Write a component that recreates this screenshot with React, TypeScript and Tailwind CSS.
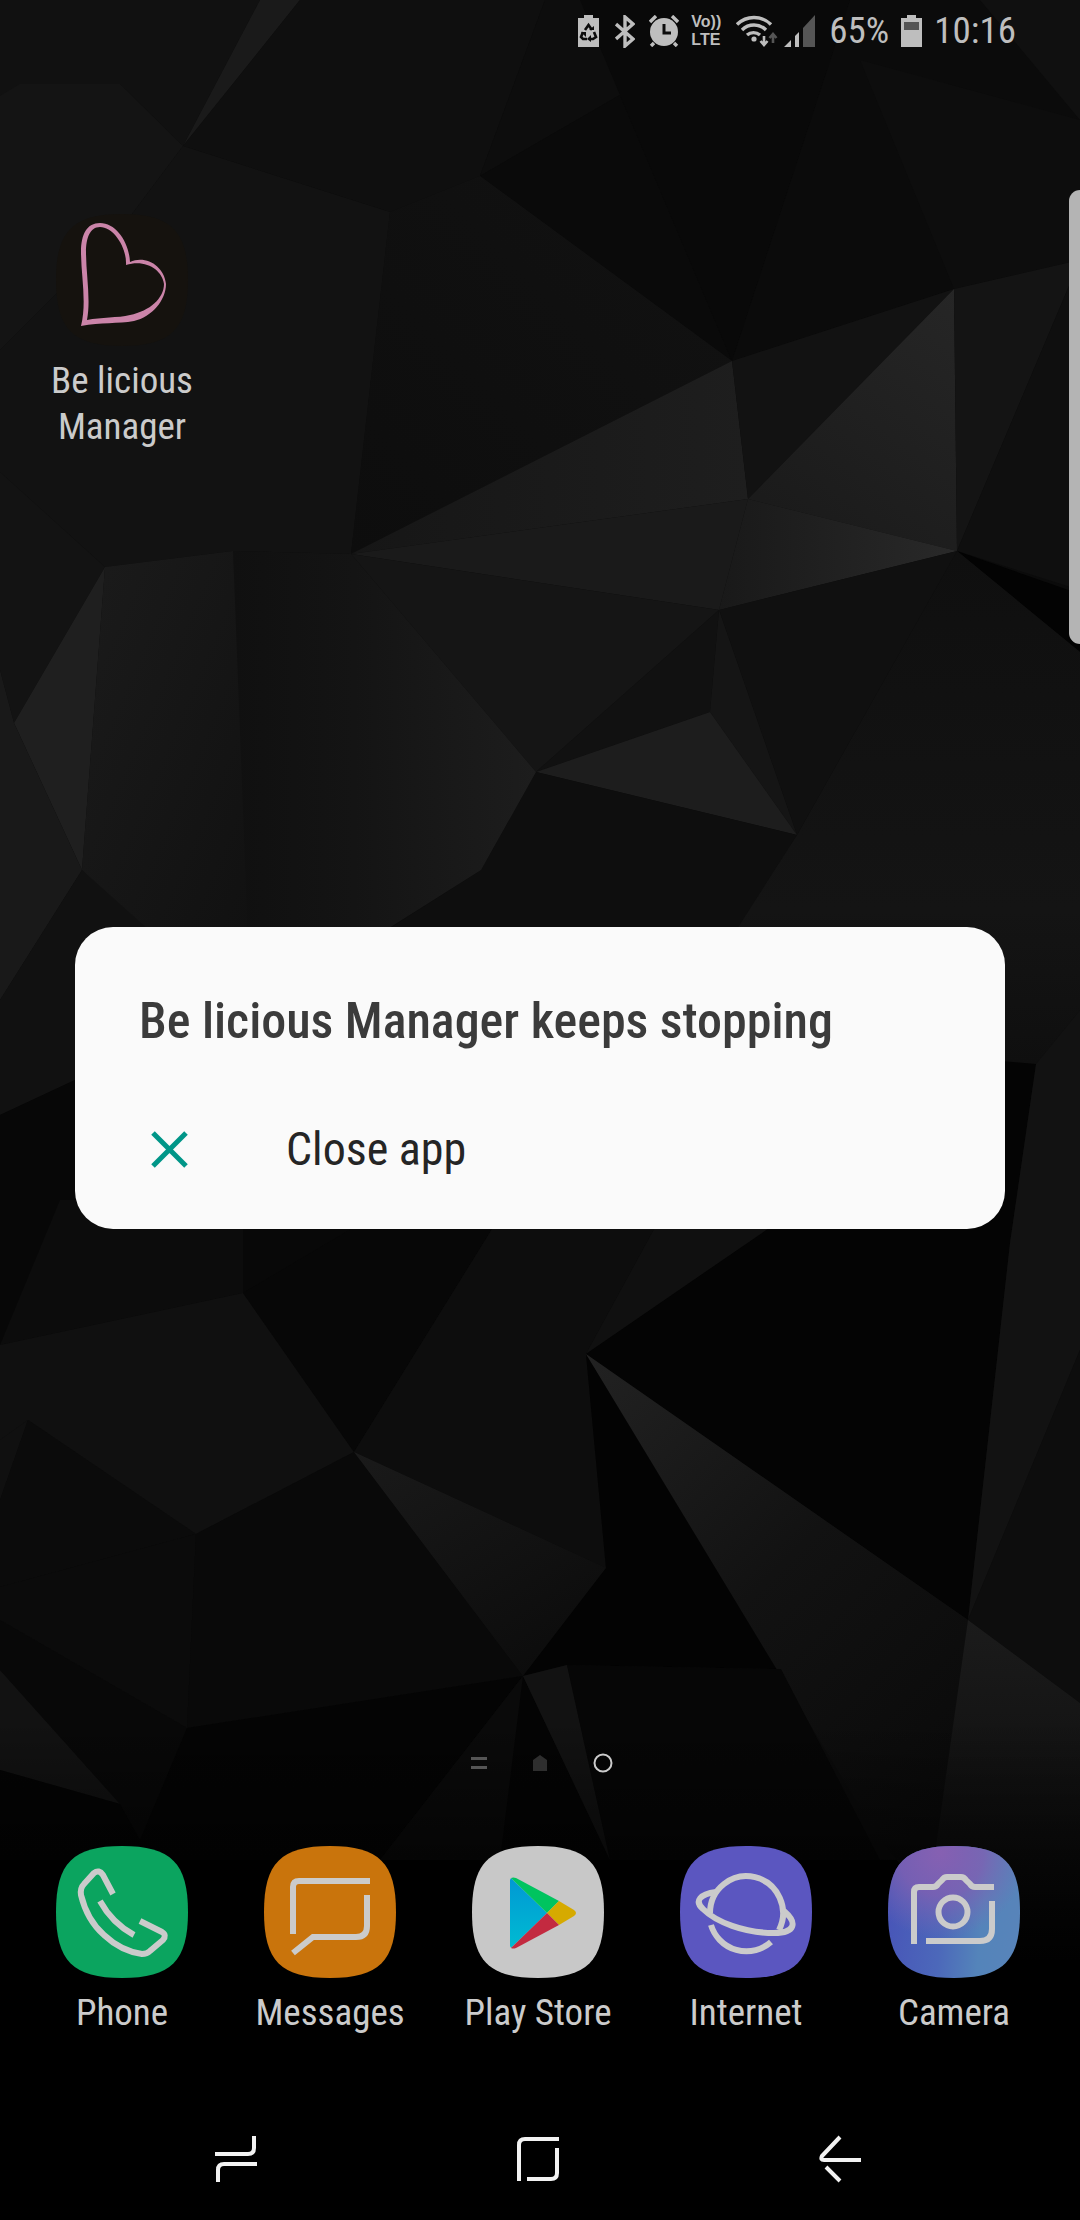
import type { ReactNode } from "react";

const facets = [
  // top
  { points: "0,0 260,0 183,146 120,84 0,96", fill: "#111111" },
  { points: "20,84 120,84 183,146 120,230 0,350 0,96", fill: "#141414" },
  { points: "260,0 300,0 183,146", fill: "#1a1a1a" },
  { points: "300,0 545,0 480,176 390,212 183,146", fill: "#0f0f0f" },
  { points: "545,0 700,0 620,95 480,176", fill: "#0d0d0d" },
  { points: "620,95 732,361 480,176", fill: "#0a0a0a" },
  { points: "580,0 850,0 732,361 620,95", fill: "#090909" },
  { points: "850,0 1080,0 1080,130 954,289 732,361", fill: "#0b0b0b" },
  { points: "980,0 1080,0 1080,120", fill: "#101010" },
  { points: "1080,120 1080,260 954,289 860,60", fill: "#0d0d0d" },
  { points: "183,146 390,212 351,554 233,551 105,567 0,472 0,350 120,230", fill: "#121212" },
  { points: "390,212 480,176 732,361 351,554", fill: "url(#deep)" },
  // centre right cluster
  { points: "351,554 732,361 748,499", fill: "url(#wingTop)" },
  { points: "732,361 954,289 748,499", fill: "#121212" },
  { points: "954,289 957,551 748,499", fill: "url(#bright)" },
  { points: "351,554 748,499 719,610", fill: "#1a1a1a" },
  { points: "748,499 957,551 719,610", fill: "url(#wedge)" },
  { points: "954,289 1080,260 957,551", fill: "#141414" },
  { points: "1080,260 1080,590 957,551", fill: "#0f0f0f" },
  { points: "957,551 1080,594 1080,652", fill: "#030303" },
  { points: "957,551 1080,652 1080,1010 1036,1064 720,1064 730,930 797,835", fill: "url(#rightSlab)" },
  { points: "719,610 957,551 797,835", fill: "#101010" },
  { points: "351,554 719,610 536,772", fill: "#151515" },
  { points: "719,610 710,712 536,772", fill: "#111111" },
  { points: "719,610 797,835 710,712", fill: "#151515" },
  { points: "536,772 710,712 797,835", fill: "#1d1d1d" },
  { points: "536,772 797,835 730,940 390,928 481,870", fill: "#0e0e0e" },
  { points: "351,554 536,772 481,870 370,940 240,940 233,551", fill: "url(#spine)" },
  // left
  { points: "0,472 105,567 14,723 0,670", fill: "#131313" },
  { points: "105,567 82,870 14,723", fill: "#1f1f1f" },
  { points: "105,567 233,551 248,940 150,940 82,870", fill: "url(#leftSlab)" },
  { points: "0,670 14,723 82,870 0,1000", fill: "#191919" },
  { points: "82,870 160,940 75,1080 0,1115 0,1000", fill: "#111111" },
  { points: "0,1115 75,1080 80,1229 0,1345", fill: "#070707" },
  // below the card
  { points: "0,1345 60,1200 243,1200 243,1293", fill: "#0c0c0c" },
  { points: "243,1200 420,1200 243,1293", fill: "#080808" },
  { points: "0,1345 243,1293 354,1452 196,1534 28,1420 0,1440", fill: "#101010" },
  { points: "243,1293 400,1200 510,1200 354,1452", fill: "#070707" },
  { points: "510,1200 670,1200 586,1354 606,1568 354,1452", fill: "#0d0d0d" },
  { points: "670,1200 810,1200 586,1354", fill: "#101010" },
  { points: "810,1200 990,1060 1036,1064 1010,1243 968,1620 586,1354", fill: "#040404" },
  { points: "1036,1064 1080,1010 1080,1350 968,1620 1010,1243", fill: "#121212" },
  { points: "1080,1350 1080,1703 968,1620", fill: "#0d0d0d" },
  { points: "0,1440 28,1420 0,1500", fill: "#101010" },
  { points: "28,1420 196,1534 0,1587 0,1500", fill: "#0b0b0b" },
  { points: "0,1587 196,1534 187,1728 0,1620", fill: "#0b0b0b" },
  { points: "196,1534 354,1452 523,1676 187,1728", fill: "#090909" },
  { points: "354,1452 606,1568 523,1676", fill: "url(#kite)" },
  { points: "586,1354 781,1669 567,1665 523,1676 606,1568", fill: "#030303" },
  { points: "586,1354 968,1620 930,1900 880,1840", fill: "url(#spike)" },
  { points: "968,1620 1080,1703 1080,1960 920,1960", fill: "url(#corner)" },
  { points: "0,1670 120,1804 0,1770", fill: "#121212" },
  { points: "0,1620 187,1728 140,1840 120,1804 0,1670", fill: "#080808" },
  { points: "0,1770 120,1804 140,1840 187,1728 523,1676 380,1860 0,1860", fill: "#040404" },
  { points: "523,1676 500,1860 380,1860", fill: "#0a0a0a" },
  { points: "523,1676 610,1860 500,1860", fill: "#040404" },
  { points: "523,1676 567,1665 610,1860", fill: "#121212" },
  { points: "567,1665 781,1669 880,1860 610,1860", fill: "#060606" },
];

function Wallpaper() {
  return (
    <svg
      aria-hidden="true"
      viewBox="0 0 1080 2220"
      preserveAspectRatio="xMidYMid slice"
      className="absolute inset-0 h-full w-full"
    >
      <defs>
        <linearGradient id="deep" x1="0" y1="1" x2="1" y2="0">
          <stop stopColor="#0d0d0d" />
          <stop offset="1" stopColor="#121212" />
        </linearGradient>
        <linearGradient id="wingTop">
          <stop stopColor="#161616" />
          <stop offset="1" stopColor="#1e1e1e" />
        </linearGradient>
        <linearGradient id="bright" x1="1" y1="0" x2="0.4" y2="1">
          <stop stopColor="#262626" />
          <stop offset="1" stopColor="#1b1b1b" />
        </linearGradient>
        <linearGradient id="wedge">
          <stop stopColor="#191919" />
          <stop offset="1" stopColor="#292929" />
        </linearGradient>
        <linearGradient id="rightSlab" x1="0" y1="0" x2="0" y2="1">
          <stop stopColor="#0f0f0f" />
          <stop offset="0.7" stopColor="#141414" />
          <stop offset="1" stopColor="#0f0f0f" />
        </linearGradient>
        <linearGradient id="spine">
          <stop stopColor="#101010" />
          <stop offset="0.4" stopColor="#141414" />
          <stop offset="1" stopColor="#1d1d1d" />
        </linearGradient>
        <linearGradient id="leftSlab" x1="0" y1="0" x2="1" y2="1">
          <stop stopColor="#1b1b1b" />
          <stop offset="1" stopColor="#111111" />
        </linearGradient>
        <linearGradient id="kite" x1="0" y1="0" x2="0.7" y2="1">
          <stop stopColor="#1a1a1a" />
          <stop offset="1" stopColor="#0c0c0c" />
        </linearGradient>
        <linearGradient id="spike" x1="0" y1="0" x2="0.7" y2="1">
          <stop stopColor="#222222" />
          <stop offset="0.5" stopColor="#121212" />
          <stop offset="1" stopColor="#0a0a0a" />
        </linearGradient>
        <linearGradient id="corner" x1="0" y1="0" x2="0" y2="1">
          <stop stopColor="#1b1b1b" />
          <stop offset="1" stopColor="#080808" />
        </linearGradient>
        <linearGradient id="floor" x1="0" y1="0" x2="0" y2="1">
          <stop stopColor="#000" stopOpacity="0" />
          <stop offset="0.5" stopColor="#000" stopOpacity="0.9" />
          <stop offset="1" stopColor="#000" />
        </linearGradient>
      </defs>
      <rect width="1080" height="1860" fill="#0b0b0b" />
      {facets.map((facet) => (
        <polygon key={facet.points} points={facet.points} fill={facet.fill} />
      ))}
      <rect y="1720" width="1080" height="500" fill="url(#floor)" />
    </svg>
  );
}

function StatusBar() {
  return (
    <header className="flex h-[62px] items-center justify-end pr-16 text-[37px] text-[#bebebe]">
      <svg width="21" height="32" viewBox="0 0 21 32" fill="currentColor">
        <path d="M6 0h9v3h6v29H0V3h6z" />
        <path d="M7 15l3.500-5 3.500 5M16 17l2 5-3 2h-3M9 24H5l-2-2 2-5" fill="none" stroke="#0c0c0c" strokeWidth="2.600" />
        <path d="M11 15h5v-4zM13 20v7l-4-3zM3 17h5v5z" fill="#0c0c0c" />
      </svg>
      <svg className="ml-4" width="20" height="33" viewBox="0 0 20 33" fill="none" stroke="currentColor" strokeWidth="3.400">
        <path d="M1 9l17 15-8 7V2l8 7L1 24" />
      </svg>
      <svg className="ml-[14px]" width="30" height="32" viewBox="0 0 30 32">
        <circle cx="15" cy="17" r="14" fill="currentColor" />
        <path d="M1 7l6-6M29 7l-6-6M5 28l-3 3M25 28l3 3" stroke="currentColor" strokeWidth="3.400" />
        <path d="M15 9v9h7" fill="none" stroke="#0c0c0c" strokeWidth="3" />
      </svg>
      <span className="ml-3 w-8 font-['Liberation_Sans',sans-serif] text-[16px] leading-[18px] font-bold">
        Vo))
        <br />
        LTE
      </span>
      <svg className="ml-[13px]" width="42" height="32" viewBox="0 0 42 32" fill="none" stroke="currentColor" strokeWidth="3.400">
        <path d="M1 9.500a24 24 0 0 1 34 0M6 15a17 17 0 0 1 24 0M11 20a10 10 0 0 1 13 0" />
        <circle cx="18" cy="24" r="2.600" fill="currentColor" stroke="none" />
        <path d="M28 21v9M24.500 26l3.500 4 3.500-4" strokeWidth="2.600" />
        <path d="M37 28v-9M33.500 23l3.500-4 3.500 4" stroke="#555555" strokeWidth="2.600" />
      </svg>
      <svg className="ml-[6px]" width="31" height="32" viewBox="0 0 31 32" fill="currentColor">
        <path d="M0 32l7-7v7zM11 21l4-4v15h-4z" />
        <path d="M19 13L31 0v32H19z" fill="#555555" />
      </svg>
      <span className="ml-[14px]">65%</span>
      <svg className="ml-3" width="21" height="32" viewBox="0 0 21 32">
        <path d="M6 0h9v3h6v29H0V3h6z" fill="currentColor" />
        <path d="M3 7h15v8H3z" fill="#555555" />
      </svg>
      <time className="ml-3">10:16</time>
    </header>
  );
}

const squircle = "M0 66C0 17 17 0 66 0s66 17 66 66-17 66-66 66S0 115 0 66Z";

function AppIcon({ fill, children }: { fill: string; children: ReactNode }) {
  return (
    <svg
      aria-hidden="true"
      viewBox="0 0 132 132"
      className="size-[132px]"
      fill="none"
      stroke="#cbcbcb"
      strokeWidth="6"
    >
      <path d={squircle} fill={fill} stroke="none" />
      {children}
    </svg>
  );
}

const dock = [
  {
    name: "Phone",
    icon: (
      <AppIcon fill="#0ba45f">
        <path d="M57 48L47 29Q43 23 38 27L28 38Q24 42 25 49Q31 74 48 89Q65 105 86 108Q91 108 94 105L107 94Q111 89 106 86L84 75" />
        <path d="M44 55Q56 77 78 89" />
      </AppIcon>
    ),
  },
  {
    name: "Messages",
    icon: (
      <AppIcon fill="#c9740c">
        <path d="M106 35H35Q29 35 29 41V88M103 49V80Q103 91 92 91H49L29 107" />
      </AppIcon>
    ),
  },
  {
    name: "Play Store",
    icon: (
      <AppIcon fill="#c8c8c8">
        <defs>
          <linearGradient id="playBlue" x1="0" y1="0" x2="0" y2="1">
            <stop stopColor="#0098d4" />
            <stop offset="1" stopColor="#00bbd2" />
          </linearGradient>
        </defs>
        <g stroke="none">
          <path d="M38 34L39 32L75 67L39 102L38 100Z" fill="url(#playBlue)" />
          <path d="M39 32Q41 31 44 32L87 55L75 67Z" fill="#00c45f" />
          <path d="M87 55L102 64Q106 67 102 70L87 79L75 67Z" fill="#d6aa00" />
          <path d="M75 67L87 79L44 102Q41 103 39 102Z" fill="#c32a40" />
        </g>
      </AppIcon>
    ),
  },
  {
    name: "Internet",
    icon: (
      <AppIcon fill="#5b56c0">
        <path d="M30 67A36.500 37 0 1 1 99 84" />
        <path d="M36 46C20 48 14 55 23 63C36 76 64 87 94 87C115 87 118 77 104 65" />
        <path d="M31 79A37 37 0 0 0 91 96" />
      </AppIcon>
    ),
  },
  {
    name: "Camera",
    icon: (
      <AppIcon fill="url(#cameraBase)">
        <defs>
          <linearGradient id="cameraBase" x1="0" y1="0.600" x2="1" y2="0.700">
            <stop stopColor="#4856b8" />
            <stop offset="0.400" stopColor="#4c68ba" />
            <stop offset="0.700" stopColor="#5484ba" />
            <stop offset="1" stopColor="#5884ba" />
          </linearGradient>
          <radialGradient id="cameraGlow" cx="0.400" cy="0.050" r="0.650">
            <stop stopColor="#8660b2" />
            <stop offset="0.500" stopColor="#8060b2" stopOpacity="0.800" />
            <stop offset="1" stopColor="#7a66b4" stopOpacity="0" />
          </radialGradient>
        </defs>
        <path d={squircle} fill="url(#cameraGlow)" stroke="none" />
        <path d="M26 98V46Q26 41 31 41H45Q48 41 50 38L54 34Q56 31 59 31H73Q76 31 78 34L82 38Q84 41 87 41H106" />
        <path d="M104 55V83Q104 95 92 95H38" />
        <circle cx="65" cy="66" r="14.500" />
      </AppIcon>
    ),
  },
];

function CrashDialog() {
  return (
    <div className="absolute inset-0 flex items-center justify-center px-[75px] pb-16">
      <section
        role="alertdialog"
        aria-labelledby="crash-title"
        className="w-full rounded-[38px] bg-[#fafafa] px-16 pt-[62px] pb-8"
      >
        <h1 id="crash-title" className="text-[50px] leading-[64px] font-medium text-[#3b3b3b]">
          Be licious Manager keeps stopping
        </h1>
        <button className="mt-12 flex h-24 w-full items-center gap-[98px] pl-3 text-left text-[46px] text-[#252525]">
          <svg aria-hidden="true" width="37" height="37" viewBox="0 0 37 37" stroke="#009688" strokeWidth="5">
            <path d="M2 2l33 33M35 2L2 35" />
          </svg>
          Close app
        </button>
      </section>
    </div>
  );
}

export default function App() {
  return (
    <main className="relative flex min-h-screen flex-col overflow-hidden bg-black font-['Roboto_Condensed',Roboto,sans-serif]">
      <Wallpaper />

      <div className="relative flex flex-1 flex-col">
        <StatusBar />

        <div className="grid flex-1 grid-cols-5 items-start pt-[152px] pr-[22px] pl-[18px]">
          <button className="flex flex-col items-center text-[37px] leading-[46px] text-[#cbcbcb]">
            <AppIcon fill="#15120e">
              <path
                fill="#cb84a9"
                fillRule="evenodd"
                stroke="none"
                d="M74 48C73 28 60 9 44 9C31 9 25 20 25 38C25 62 31 88 25 112C45 108 62 110 78 107C96 103 110 86 110 70C108 52 90 41 74 48ZM70 51C71 34 58 13 44 13C34 13 30 24 30 38C30 60 35 86 31 106C45 103 62 104 74 101C94 97 108 84 108 70C106 56 90 45 70 51Z"
              />
            </AppIcon>
            <span className="mt-3">
              Be licious
              <br />
              Manager
            </span>
          </button>
        </div>

        <div className="flex h-5 items-center justify-center gap-[45px] pl-1">
          <svg width="16" height="12" viewBox="0 0 16 12" fill="#555555">
            <path d="M0 0h16v3H0zM0 9h16v3H0z" />
          </svg>
          <svg width="16" height="16" viewBox="0 0 16 16" fill="#2e2e2e">
            <path d="M8 0l7 5v11H1V5z" />
          </svg>
          <svg width="20" height="20" viewBox="0 0 20 20" fill="none" stroke="#cbcbcb" strokeWidth="2">
            <circle cx="10" cy="10" r="8.500" />
          </svg>
        </div>

        <div className="mt-[73px] grid grid-cols-5 pr-[22px] pl-[18px]">
          {dock.map((app) => (
            <button key={app.name} className="flex flex-col items-center gap-3 text-[37px] leading-[46px] text-[#cbcbcb]">
              {app.icon}
              <span className="whitespace-nowrap">{app.name}</span>
            </button>
          ))}
        </div>

        <nav className="mt-[62px] grid h-[122px] grid-cols-3 pr-[89px] pl-[85px]">
          <button aria-label="Recents" className="flex items-center justify-center">
            <svg width="42" height="48" viewBox="0 0 42 48" fill="none" stroke="#f2f2f2" strokeWidth="4">
              <path d="M0 19H33Q39 19 39 13V1M42 29H9Q3 29 3 35V47" />
            </svg>
          </button>
          <button aria-label="Home" className="flex items-center justify-center">
            <svg width="42" height="46" viewBox="0 0 42 46" fill="none" stroke="#f2f2f2" strokeWidth="4">
              <path d="M42 3H8Q2 3 2 9V45M40 12V37Q40 43 34 43H10" />
            </svg>
          </button>
          <button aria-label="Back" className="flex items-center justify-center">
            <svg width="42" height="48" viewBox="0 0 42 48" fill="none" stroke="#f2f2f2" strokeWidth="4">
              <path d="M21 2L3 21Q1 25 5 25H42M7 32L21 46" />
            </svg>
          </button>
        </nav>
      </div>

      {/* edge panel handle */}
      <div className="absolute top-[190px] right-0 h-[454px] w-[11px] rounded-l-xl bg-[#b4b4b4]" />

      <CrashDialog />
    </main>
  );
}
